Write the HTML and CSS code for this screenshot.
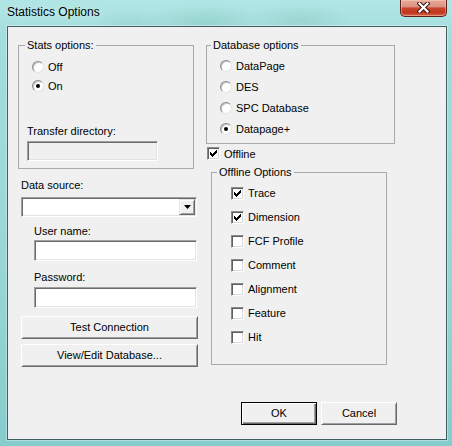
FILE: index.html
```html
<!DOCTYPE html>
<html>
<head>
<meta charset="utf-8">
<title>Statistics Options</title>
<link rel="stylesheet" href="styles.css">
</head>
<body>
<div class="window">
  <div class="titlebar">
    <span class="title">Statistics Options</span>
    <div class="close">
      <svg width="13" height="11" viewBox="0 0 13 11">
        <path d="M2.5 1.5 L10.5 9.5 M10.5 1.5 L2.5 9.5" stroke="#3b1410" stroke-width="4.2" stroke-linecap="square" fill="none"/>
        <path d="M2.5 1.5 L10.5 9.5 M10.5 1.5 L2.5 9.5" stroke="#ffffff" stroke-width="2.2" stroke-linecap="square" fill="none"/>
      </svg>
    </div>
  </div>
  <div class="client">
    <div class="main">
      <div class="col-left">
        <fieldset class="group stats">
          <legend>Stats options:</legend>
          <div class="opt"><span class="rb"></span>Off</div>
          <div class="opt"><span class="rb on"></span>On</div>
          <div class="lbl transfer">Transfer directory:</div>
          <div class="edit disabled transfer-edit"></div>
        </fieldset>
        <div class="lbl ds-lbl">Data source:</div>
        <div class="edit combo">
          <span class="drop"><svg width="7" height="4" viewBox="0 0 7 4"><polygon points="0,0 7,0 3.5,4" fill="#000"/></svg></span>
        </div>
        <div class="indent">
          <div class="lbl user-lbl">User name:</div>
          <div class="edit field"></div>
          <div class="lbl pass-lbl">Password:</div>
          <div class="edit field pass-edit"></div>
        </div>
        <div class="btn wide test">Test Connection</div>
        <div class="btn wide view">View/Edit Database...</div>
      </div>
      <div class="col-right">
        <fieldset class="group db">
          <legend>Database options</legend>
          <div class="opt"><span class="rb"></span>DataPage</div>
          <div class="opt"><span class="rb"></span>DES</div>
          <div class="opt"><span class="rb"></span>SPC Database</div>
          <div class="opt"><span class="rb on"></span>Datapage+</div>
        </fieldset>
        <div class="chk offline"><span class="cb on"><svg width="11" height="11" viewBox="0 0 11 11" shape-rendering="crispEdges"><polygon points="2,4 3,4 3,5 4,5 4,6 5,6 5,5 6,5 6,4 7,4 7,3 8,3 8,2 9,2 9,5 8,5 8,6 7,6 7,7 6,7 6,8 5,8 5,9 4,9 4,8 3,8 3,7 2,7" fill="#000"/></svg></span>Offline</div>
        <fieldset class="group offopts">
          <legend>Offline Options</legend>
          <div class="chk"><span class="cb on"><svg width="11" height="11" viewBox="0 0 11 11" shape-rendering="crispEdges"><polygon points="2,4 3,4 3,5 4,5 4,6 5,6 5,5 6,5 6,4 7,4 7,3 8,3 8,2 9,2 9,5 8,5 8,6 7,6 7,7 6,7 6,8 5,8 5,9 4,9 4,8 3,8 3,7 2,7" fill="#000"/></svg></span>Trace</div>
          <div class="chk"><span class="cb on"><svg width="11" height="11" viewBox="0 0 11 11" shape-rendering="crispEdges"><polygon points="2,4 3,4 3,5 4,5 4,6 5,6 5,5 6,5 6,4 7,4 7,3 8,3 8,2 9,2 9,5 8,5 8,6 7,6 7,7 6,7 6,8 5,8 5,9 4,9 4,8 3,8 3,7 2,7" fill="#000"/></svg></span>Dimension</div>
          <div class="chk"><span class="cb"></span>FCF Profile</div>
          <div class="chk"><span class="cb"></span>Comment</div>
          <div class="chk"><span class="cb"></span>Alignment</div>
          <div class="chk"><span class="cb"></span>Feature</div>
          <div class="chk"><span class="cb"></span>Hit</div>
        </fieldset>
      </div>
    </div>
    <div class="footer">
      <div class="btn default">OK</div>
      <div class="btn">Cancel</div>
    </div>
  </div>
</div>
</body>
</html>
```

FILE: styles.css
```css
html, body {
  margin: 0;
  padding: 0;
}

body {
  width: 452px;
  height: 446px;
  overflow: hidden;
  font-family: "Liberation Sans", Arial, sans-serif;
  font-size: 11px;
  color: #000;
}

.window {
  height: 446px;
  display: flex;
  flex-direction: column;
  background:
    radial-gradient(ellipse 60px 18px at 205px 22px, rgba(120, 190, 170, 0.35), transparent),
    radial-gradient(ellipse 50px 16px at 300px 20px, rgba(120, 190, 170, 0.3), transparent),
    radial-gradient(ellipse 40px 14px at 130px 24px, rgba(130, 200, 190, 0.3), transparent),
    linear-gradient(180deg, #b2e6e6 0%, #a3dddd 8%, #98d6d6 60%, #86cccc 100%);
}

.titlebar {
  flex: none;
  height: 26px;
  display: flex;
  justify-content: space-between;
  align-items: flex-start;
}

.title {
  font-size: 12px;
  line-height: 14px;
  padding: 5px 0 0 7px;
  color: #000;
  text-shadow: 0 0 6px rgba(235, 252, 252, 0.9);
}

.close {
  width: 47px;
  height: 17px;
  box-sizing: border-box;
  margin-right: 5px;
  border: 1px solid #5a2219;
  border-top: none;
  border-radius: 0 0 5px 5px;
  background: linear-gradient(180deg, #e6ab9b 0%, #dc9280 42%, #c9462f 50%, #c23520 78%, #d8674a 100%);
  box-shadow: inset 0 0 0 1px rgba(255, 210, 190, 0.45);
  display: flex;
  align-items: center;
  justify-content: center;
}

.close svg {
  display: block;
  margin-top: -1px;
}

.client {
  flex: 1;
  margin: 0 5px 6px 7px;
  border: 1px solid #3f5e60;
  box-shadow: 0 0 0 1px rgba(255, 255, 255, 0.35);
  background: #f0f0f0;
  display: flex;
  flex-direction: column;
}

.main {
  display: flex;
  gap: 7px;
  padding: 12px 0 0 10px;
}

.col-left {
  width: 181px;
  display: flex;
  flex-direction: column;
  align-items: flex-start;
}

.col-right {
  width: 189px;
  display: flex;
  flex-direction: column;
  align-items: flex-start;
}

.group {
  margin: 0;
  box-sizing: border-box;
  min-width: 0;
  border: 1px solid #a9a9a9;
}

.group legend {
  padding: 0 2px;
  line-height: 13px;
}

.stats {
  width: 176px;
  height: 130px;
  padding: 5px 0 0 6px;
}

.db {
  width: 189px;
  height: 105px;
  padding: 3px 0 0 4px;
}

.offopts {
  width: 176px;
  height: 199px;
  margin-top: 3px;
  margin-left: 5px;
  padding: 2px 0 0 5px;
}

.opt {
  display: flex;
  align-items: center;
  height: 19px;
  margin-left: 7px;
}

.db .opt {
  height: 21px;
  margin-left: 9px;
}

.rb {
  position: relative;
  width: 12px;
  height: 12px;
  box-sizing: border-box;
  margin-right: 4px;
  border-radius: 50%;
  background: #fff;
  border: 1px solid;
  border-color: #8c8c8c #e4e4e4 #e4e4e4 #8c8c8c;
  box-shadow: inset 1px 1px 0 #c4c4c4;
}

.rb.on::after {
  content: "";
  position: absolute;
  left: 3px;
  top: 3px;
  width: 4px;
  height: 4px;
  border-radius: 50%;
  background: #000;
}

.chk {
  display: flex;
  align-items: center;
  height: 24px;
  margin-left: 14px;
}

.chk.offline {
  height: 19px;
  margin-left: 1px;
}

.cb {
  width: 13px;
  height: 13px;
  box-sizing: border-box;
  margin-right: 4px;
  background: #fff;
  border: 1px solid;
  border-color: #8a8a8a #ffffff #ffffff #8a8a8a;
  box-shadow: inset 1px 1px 0 #5f5f5f, inset -1px -1px 0 #dcdcdc;
}

.cb svg {
  display: block;
}

.lbl {
  line-height: 13px;
}

.transfer {
  margin-top: 30px;
  margin-left: 2px;
}

.edit {
  box-sizing: border-box;
  background: #fff;
  border: 1px solid;
  border-color: #a0a0a0 #ffffff #ffffff #a0a0a0;
  box-shadow: inset 1px 1px 0 #6a6a6a, inset -1px -1px 0 #e3e3e3;
}

.edit.disabled {
  background: #f0f0f0;
}

.transfer-edit {
  margin-top: 3px;
  margin-left: 2px;
  width: 131px;
  height: 20px;
}

.ds-lbl {
  margin-top: 10px;
  margin-left: 3px;
}

.combo {
  margin-top: 5px;
  margin-left: 3px;
  width: 176px;
  height: 20px;
  display: flex;
  justify-content: flex-end;
  align-items: center;
  padding: 1px;
}

.drop {
  width: 16px;
  height: 16px;
  box-sizing: border-box;
  background: #f0f0f0;
  border: 1px solid;
  border-color: #e3e3e3 #696969 #696969 #e3e3e3;
  box-shadow: inset 1px 1px 0 #fff, inset -1px -1px 0 #a0a0a0;
  display: flex;
  align-items: center;
  justify-content: center;
}

.drop svg {
  display: block;
}

.indent {
  margin-left: 16px;
  display: flex;
  flex-direction: column;
}

.user-lbl {
  margin-top: 8px;
}

.field {
  margin-top: 2px;
  width: 163px;
  height: 21px;
}

.pass-lbl {
  margin-top: 10px;
}

.pass-edit {
  margin-top: 3px;
}

.btn {
  box-sizing: border-box;
  width: 76px;
  height: 23px;
  background: #f0f0f0;
  border: 1px solid;
  border-color: #ffffff #696969 #696969 #ffffff;
  box-shadow: inset 1px 1px 0 #f0f0f0, inset -1px -1px 0 #a0a0a0;
  display: flex;
  align-items: center;
  justify-content: center;
  line-height: 13px;
}

.btn.default {
  border-color: #000;
  box-shadow: inset 1px 1px 0 #fff, inset -1px -1px 0 #696969, inset -2px -2px 0 #a0a0a0;
}

.btn.wide {
  width: 177px;
  margin-left: 3px;
}

.test {
  margin-top: 8px;
}

.view {
  margin-top: 5px;
}

.footer {
  margin-top: auto;
  display: flex;
  justify-content: flex-end;
  gap: 4px;
  padding: 0 49px 14px 0;
}
```
